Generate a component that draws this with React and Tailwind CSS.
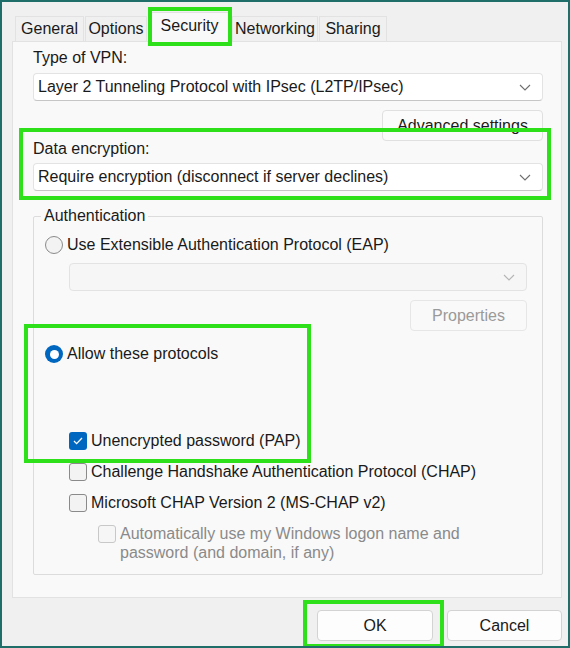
import React from "react";

const Chevron = ({ className }) => (
  <svg width="12" height="7" viewBox="0 0 12 7" className={className}>
    <path d="M1 1l5 5 5-5" fill="none" stroke="currentColor" strokeWidth="1.1" />
  </svg>
);

const Select = ({ value, disabled, className = "" }) => (
  <div
    className={`flex items-center justify-between h-[28px] pl-[4px] pr-[11px] rounded-[4px] border border-[#e3e3e3] ${
      disabled ? "bg-[#f6f6f6] text-[#9a9a9a]" : "bg-white border-b-[#c6c6c6] text-[#1a1a1a]"
    } ${className}`}
  >
    <span>{value}</span>
    <Chevron className={disabled ? "text-[#b5b5b5]" : "text-[#6e6e6e]"} />
  </div>
);

const Radio = ({ checked }) =>
  checked ? (
    <span className="w-[18px] h-[18px] rounded-full bg-[#0067c0] flex items-center justify-center shrink-0">
      <span className="w-[9px] h-[9px] rounded-full bg-white" />
    </span>
  ) : (
    <span className="w-[18px] h-[18px] rounded-full border border-[#8a8a8a] bg-[#f3f3f3] shrink-0" />
  );

const Check = ({ checked, disabled }) =>
  checked ? (
    <span className="w-[18px] h-[18px] rounded-[3px] bg-[#0067c0] flex items-center justify-center shrink-0">
      <svg width="10" height="8" viewBox="0 0 10 8">
        <path d="M1 4l2.6 2.6L9 1" fill="none" stroke="white" strokeWidth="1.3" />
      </svg>
    </span>
  ) : (
    <span
      className={`w-[18px] h-[18px] rounded-[3px] border shrink-0 ${
        disabled ? "border-[#c8c8c8] bg-[#f6f6f6]" : "border-[#8a8a8a] bg-[#f3f3f3]"
      }`}
    />
  );

const tabs = [
  { name: "General", w: "w-[69px]" },
  { name: "Options", w: "w-[62px]" },
  { name: "Security", w: "w-[83px]", active: true },
  { name: "Networking", w: "w-[86px]" },
  { name: "Sharing", w: "w-[68px]" },
];

export default function App() {
  return (
    <div
      className="relative w-[570px] h-[648px] bg-[#f0f0f0] border-2 border-[#1f6e69] text-[16px] text-[#1a1a1a] leading-none overflow-hidden"
      style={{ fontFamily: '"Liberation Sans", Arial, sans-serif' }}
    >
      {/* tabs */}
      <div className="flex items-end gap-[1px] ml-[13px] mt-[9px] h-[30px]">
        {tabs.map((t) =>
          t.active ? (
            <div
              key={t.name}
              className={`${t.w} h-[30px] pb-[3px] flex items-center justify-center bg-[#f9f9f9] border border-b-0 border-[#e2e2e2] relative z-10 -mb-px`}
            >
              {t.name}
            </div>
          ) : (
            <div
              key={t.name}
              className={`${t.w} h-[25px] flex items-center justify-center bg-[#f0f0f0] border border-b-0 border-[#e2e2e2]`}
            >
              {t.name}
            </div>
          )
        )}
      </div>

      {/* panel */}
      <div className="ml-[10px] mr-[6px] h-[557px] bg-[#f9f9f9] border border-[#e2e2e2] pl-[20px] pr-[18px] pt-[8px]">
        <div>Type of VPN:</div>
        <Select className="mt-[7px]" value="Layer 2 Tunneling Protocol with IPsec (L2TP/IPsec)" />
        <div className="flex justify-end mt-[9px]">
          <div className="w-[161px] h-[31px] rounded-[4px] border border-[#e0e0e0] bg-[#fbfbfb] flex items-center justify-center">
            Advanced settings
          </div>
        </div>
        <div>Data encryption:</div>
        <Select className="mt-[6px]" value="Require encryption (disconnect if server declines)" />

        {/* Authentication group */}
        <div className="relative mt-[25px] h-[359px] border border-[#dcdcdc] rounded-[2px] pl-[11px] pr-[15px]">
          <span className="absolute -top-[9px] left-[7px] px-[3px] bg-[#f9f9f9]">Authentication</span>
          <div className="flex items-center gap-[4px] mt-[19px]">
            <Radio />
            <span>Use Extensible Authentication Protocol (EAP)</span>
          </div>
          <Select disabled className="mt-[9px] ml-[24px]" value="" />
          <div className="flex justify-end mt-[9px]">
            <div className="w-[117px] h-[31px] rounded-[4px] border border-[#e6e6e6] bg-[#f9f9f9] text-[#9a9a9a] flex items-center justify-center">
              Properties
            </div>
          </div>
          <div className="flex items-center gap-[4px] mt-[14px]">
            <Radio checked />
            <span>Allow these protocols</span>
          </div>
          <div className="flex flex-col gap-[13px] mt-[69px] ml-[24px]">
            <div className="flex items-center gap-[4px]">
              <Check checked />
              <span>Unencrypted password (PAP)</span>
            </div>
            <div className="flex items-center gap-[4px]">
              <Check />
              <span>Challenge Handshake Authentication Protocol (CHAP)</span>
            </div>
            <div className="flex items-center gap-[4px]">
              <Check />
              <span>Microsoft CHAP Version 2 (MS-CHAP v2)</span>
            </div>
          </div>
          <div className="flex items-start gap-[4px] mt-[13px] ml-[53px] text-[#8a8a8a]">
            <Check disabled />
            <span className="leading-[19px] -mt-[1px]">
              Automatically use my Windows logon name and
              <br />
              password (and domain, if any)
            </span>
          </div>
        </div>
      </div>

      {/* buttons */}
      <div className="flex justify-end gap-[14px] mr-[6px] mt-[12px]">
        <div className="w-[116px] h-[31px] rounded-[4px] border border-[#d3d3d3] bg-[#fdfdfd] flex items-center justify-center">
          OK
        </div>
        <div className="w-[115px] h-[31px] rounded-[4px] border border-[#d3d3d3] bg-[#fdfdfd] flex items-center justify-center">
          Cancel
        </div>
      </div>

      {/* green highlight boxes */}
      <div className="absolute left-[146px] top-[5px] w-[84px] h-[39px] border-[4px] border-[#2ee01a] z-20" />
      <div className="absolute left-[17px] top-[126px] w-[532px] h-[72px] border-[4px] border-[#2ee01a] z-20" />
      <div className="absolute left-[22px] top-[322px] w-[287px] h-[139px] border-[4px] border-[#2ee01a] z-20" />
      <div className="absolute left-[301px] top-[598px] w-[141px] h-[48px] border-[4px] border-[#2ee01a] z-20" />
    </div>
  );
}
